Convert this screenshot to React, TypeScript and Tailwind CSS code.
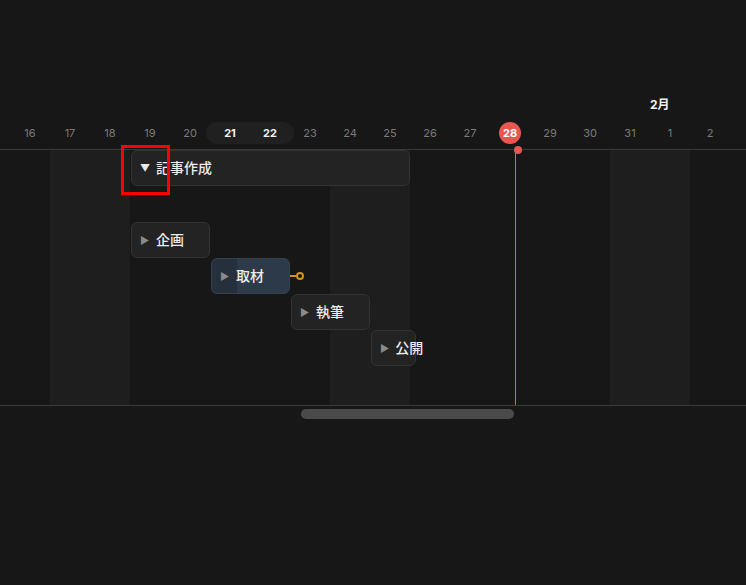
import React from "react";

const days = [16, 17, 18, 19, 20, 21, 22, 23, 24, 25, 26, 27, 28, 29, 30, 31, 1, 2];
const weekend = new Set([1, 2, 8, 9, 15, 16]);

type Task = { label: string; offset: string; width: string; open?: boolean; active?: boolean };

const tasks: (Task | null)[] = [
  { label: "記事作成", offset: "ml-[131px]", width: "w-[279px]", open: true },
  null,
  { label: "企画", offset: "ml-[131px]", width: "w-[79px]" },
  { label: "取材", offset: "ml-[211px]", width: "w-[79px]", active: true },
  { label: "執筆", offset: "ml-[291px]", width: "w-[79px]" },
  { label: "公開", offset: "ml-[371px]", width: "w-[45px]" },
];

function TaskBar({ task }: { task: Task }) {
  return (
    <div className={`relative flex h-[36px] items-center ${task.offset}`}>
      <div
        className={`relative flex h-full shrink-0 items-center gap-[6px] overflow-visible rounded-md border pb-[2px] pl-2 ${task.width} ${
          task.active ? "border-[#33404e] bg-[#2c3a4a]" : "border-[#333333] bg-[#232323]"
        }`}
      >
        {task.active && <div className="absolute inset-y-0 left-0 w-[25px] rounded-l-md bg-[#25303c]" />}
        <span
          className={`relative w-[10px] pt-[2px] text-[10px] leading-none ${task.open ? "text-[#e8e8e8]" : "text-[#8a8a8a]"}`}
        >
          {task.open ? "▼" : "▶"}
        </span>
        <span className="relative whitespace-nowrap text-[14px] font-medium text-[#ececec]">{task.label}</span>
      </div>
      {task.active && (
        <div className="flex items-center">
          <div className="h-[2px] w-[6px] bg-[#d4921f]" />
          <div className="h-[8px] w-[8px] rounded-full border-2 border-[#d4921f]" />
        </div>
      )}
    </div>
  );
}

export default function App() {
  return (
    <div
      className="relative h-[585px] w-[746px] overflow-hidden bg-[#171717]"
      style={{ fontFamily: "Inter, 'Noto Sans CJK JP', 'Noto Sans', sans-serif" }}
    >
      <div className="h-[94px]" />
      {/* month row */}
      <div className="flex h-[22px] items-center pl-[650px]">
        <span className="text-[12px] font-bold text-[#f0f0f0]">2月</span>
      </div>
      {/* day row */}
      <div className="relative flex h-[34px] items-start border-b border-[#3a3a3a] pl-[10px] pt-[6px]">
        <div className="absolute left-[206px] top-[6px] h-[22px] w-[88px] rounded-full bg-[#202020]" />
        {days.map((d, i) => (
          <div key={i} className="relative flex h-[22px] w-[40px] shrink-0 items-center justify-center">
            {d === 28 ? (
              <span className="flex h-[22px] w-[22px] items-center justify-center rounded-full bg-[#e5574f] text-[11px] font-bold text-white">
                28
              </span>
            ) : (
              <span
                className={`text-[11px] ${d === 21 || d === 22 ? "font-bold text-[#f2f2f2]" : "text-[#7b7b7b]"}`}
              >
                {d}
              </span>
            )}
          </div>
        ))}
      </div>
      {/* body */}
      <div className="relative grid h-[256px] border-b border-[#3a3a3a]">
        <div className="col-start-1 row-start-1 flex pl-[10px]">
          {days.map((d, i) => (
            <div key={i} className={`h-full w-[40px] shrink-0 ${weekend.has(i) ? "bg-[#1e1e1e]" : ""}`} />
          ))}
        </div>
        <div className="col-start-1 row-start-1 flex flex-col">
          {tasks.map((t, i) => (t ? <TaskBar key={i} task={t} /> : <div key={i} className="h-[36px]" />))}
        </div>
        {/* today marker */}
        <div className="absolute left-[515px] top-0 h-full w-px bg-[#e0645c]" />
        <div className="absolute left-[514px] top-[-4px] h-[8px] w-[8px] rounded-full bg-[#e5574f]" />
      </div>
      {/* scrollbar */}
      <div className="pl-[301px] pt-[3px]">
        <div className="h-[10px] w-[213px] rounded-full bg-[#4a4a4a]" />
      </div>
      {/* annotation box */}
      <div className="absolute left-[121px] top-[145px] h-[50px] w-[49px] border-[3px] border-[#ff0000]" />
    </div>
  );
}
